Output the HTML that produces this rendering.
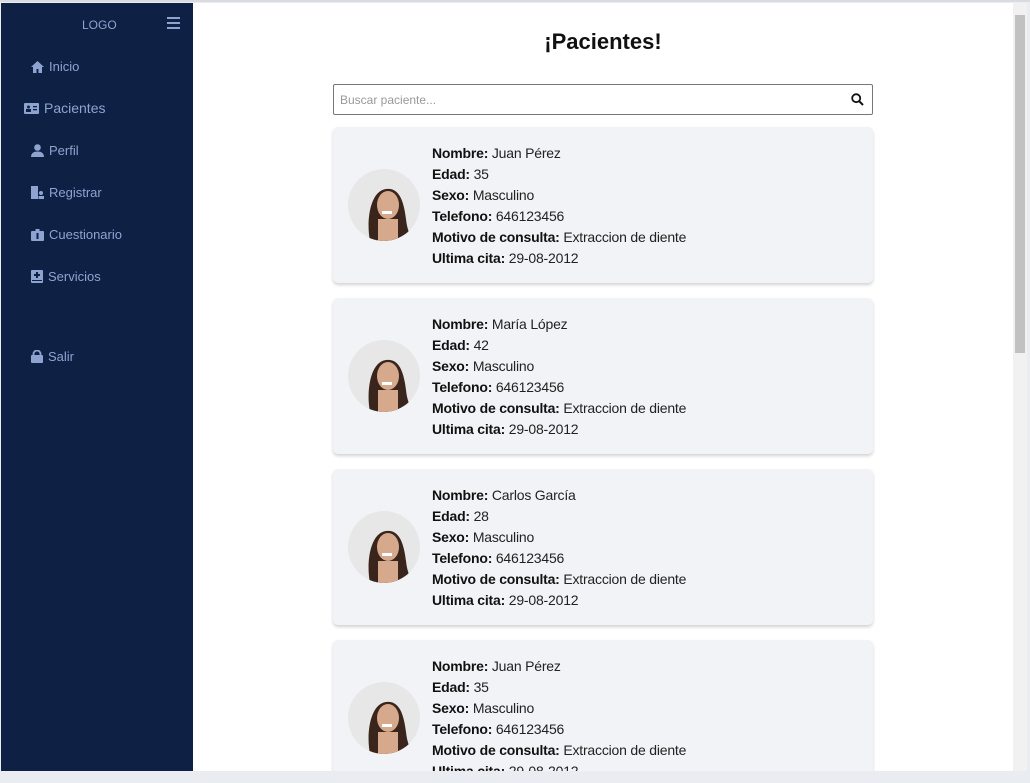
<!DOCTYPE html>
<html><head><meta charset="utf-8"><style>
*{box-sizing:border-box;margin:0;padding:0}
body{width:1030px;height:783px;overflow:hidden;background:#e9ecf1;font-family:"Liberation Sans",sans-serif;position:relative}
.top{position:absolute;left:0;top:0;width:1030px;height:2px;background:#d8dbe0}
.side{position:absolute;left:1px;top:3px;width:192px;height:768px;background:#0f2045;color:#8ea3cf}
.logo{position:absolute;left:81px;top:15px;font-size:12px;color:#8ea3cf}
.ham{position:absolute;left:166px;top:14px;width:13px}
.ham i{display:block;height:2px;background:#8ea3cf;margin-bottom:3px}
.nav{position:absolute;font-size:13px;display:flex;align-items:center;gap:5px}
.nav svg{fill:#8ea3cf}
.main{position:absolute;left:193px;top:3px;width:820px;height:768px;background:#fff;overflow:hidden}
.sb{position:absolute;left:1013px;top:3px;width:14px;height:768px;background:#f1f1f1}
.sb i{position:absolute;left:2px;top:12px;width:10px;height:338px;background:#c1c1c1}
h1{position:absolute;left:0;width:820px;top:26px;text-align:center;font-size:22px;font-weight:bold;color:#111}
.search{position:absolute;left:140px;top:81px;width:540px;height:31px;border:1px solid #777;border-radius:2px}
.search span{position:absolute;left:6px;top:8px;font-size:12px;color:#999}
.card{position:absolute;left:140px;width:540px;height:156px;background:#f2f3f6;border-radius:5px;box-shadow:0 2px 3px rgba(0,0,0,.18)}
.av{position:absolute;left:15px;top:42px;width:72px;height:72px;border-radius:50%;background:#e6e7e6;overflow:hidden}
.info{position:absolute;left:99px;top:16px;font-size:14px;line-height:21px;color:#222;letter-spacing:-0.2px}
.info b{color:#111}
</style></head><body>
<div class="top"></div>
<div class="side">
<div class="logo">LOGO</div>
<div class="ham"><i></i><i></i><i></i></div>
<div class="nav" style="left:30px;top:56px"><svg width="13" height="12" viewBox="0 0 13 12"><path d="M6.5 0L0 6h2v6h3.5V8h2v4H11V6h2z"/></svg>Inicio</div>
<div class="nav" style="left:23px;top:97px;font-size:14px"><svg width="15" height="11" viewBox="0 0 15 11"><rect width="15" height="11" rx="1"/><rect x="2" y="6" width="5" height="3" fill="#0f2045"/><circle cx="4.5" cy="4" r="1.5" fill="#0f2045"/><rect x="9" y="3" width="4" height="1.3" fill="#0f2045"/><rect x="9" y="6" width="4" height="1.3" fill="#0f2045"/></svg>Pacientes</div>
<div class="nav" style="left:30px;top:140px"><svg width="13" height="13" viewBox="0 0 13 13"><circle cx="6.5" cy="3.5" r="3.3"/><path d="M0 13c0-4 3-5.5 6.5-5.5S13 9 13 13z"/></svg>Perfil</div>
<div class="nav" style="left:30px;top:182px"><svg width="13" height="13" viewBox="0 0 13 13"><rect width="7" height="13"/><circle cx="10" cy="7" r="2"/><rect x="7.5" y="10" width="5.5" height="3"/></svg>Registrar</div>
<div class="nav" style="left:30px;top:224px"><svg width="13" height="12" viewBox="0 0 13 12"><rect y="2" width="13" height="10" rx="1"/><rect x="5.5" y="4" width="2" height="6" fill="#0f2045"/><rect x="4.5" y="0" width="4" height="3"/></svg>Cuestionario</div>
<div class="nav" style="left:30px;top:266px"><svg width="12" height="13" viewBox="0 0 12 13"><rect width="12" height="13" rx="1"/><rect x="5" y="2" width="2" height="6" fill="#0f2045"/><rect x="3" y="4" width="6" height="2" fill="#0f2045"/><rect x="1" y="10" width="10" height="1" fill="#0f2045"/></svg>Servicios</div>
<div class="nav" style="left:30px;top:346px"><svg width="12" height="13" viewBox="0 0 12 13"><rect y="5" width="12" height="8" rx="1"/><path d="M2.5 5.5V4a3.5 3.5 0 017 0v1.5" fill="none" stroke="#8ea3cf" stroke-width="1.8"/></svg>Salir</div>
</div>
<div class="main">
<h1>¡Pacientes!</h1>
<div class="search"><span>Buscar paciente...</span><svg style="position:absolute;right:8px;top:8px" width="13" height="13" viewBox="0 0 13 13"><circle cx="5.2" cy="5.2" r="4" fill="none" stroke="#111" stroke-width="1.8"/><path d="M8.2 8.2L12 12" stroke="#111" stroke-width="2"/></svg></div>

<div class="card" style="top:124px"><div class="av"><svg width="72" height="72" viewBox="0 0 72 72"><path d="M22 72c-4-20 0-50 16-52 14-2 18 14 20 30 1 10 4 16 6 22z" fill="#3a251c"/><ellipse cx="40" cy="36" rx="11" ry="14" fill="#d6a88c"/><path d="M30 50h20v22H30z" fill="#d6a88c"/><rect x="34" y="42" width="10" height="3" fill="#fff"/></svg></div>
<div class="info"><b>Nombre:</b> Juan Pérez<br><b>Edad:</b> 35<br><b>Sexo:</b> Masculino<br><b>Telefono:</b> 646123456<br><b>Motivo de consulta:</b> Extraccion de diente<br><b>Ultima cita:</b> 29-08-2012</div></div>

<div class="card" style="top:295px"><div class="av"><svg width="72" height="72" viewBox="0 0 72 72"><path d="M22 72c-4-20 0-50 16-52 14-2 18 14 20 30 1 10 4 16 6 22z" fill="#3a251c"/><ellipse cx="40" cy="36" rx="11" ry="14" fill="#d6a88c"/><path d="M30 50h20v22H30z" fill="#d6a88c"/><rect x="34" y="42" width="10" height="3" fill="#fff"/></svg></div>
<div class="info"><b>Nombre:</b> María López<br><b>Edad:</b> 42<br><b>Sexo:</b> Masculino<br><b>Telefono:</b> 646123456<br><b>Motivo de consulta:</b> Extraccion de diente<br><b>Ultima cita:</b> 29-08-2012</div></div>

<div class="card" style="top:466px"><div class="av"><svg width="72" height="72" viewBox="0 0 72 72"><path d="M22 72c-4-20 0-50 16-52 14-2 18 14 20 30 1 10 4 16 6 22z" fill="#3a251c"/><ellipse cx="40" cy="36" rx="11" ry="14" fill="#d6a88c"/><path d="M30 50h20v22H30z" fill="#d6a88c"/><rect x="34" y="42" width="10" height="3" fill="#fff"/></svg></div>
<div class="info"><b>Nombre:</b> Carlos García<br><b>Edad:</b> 28<br><b>Sexo:</b> Masculino<br><b>Telefono:</b> 646123456<br><b>Motivo de consulta:</b> Extraccion de diente<br><b>Ultima cita:</b> 29-08-2012</div></div>

<div class="card" style="top:637px"><div class="av"><svg width="72" height="72" viewBox="0 0 72 72"><path d="M22 72c-4-20 0-50 16-52 14-2 18 14 20 30 1 10 4 16 6 22z" fill="#3a251c"/><ellipse cx="40" cy="36" rx="11" ry="14" fill="#d6a88c"/><path d="M30 50h20v22H30z" fill="#d6a88c"/><rect x="34" y="42" width="10" height="3" fill="#fff"/></svg></div>
<div class="info"><b>Nombre:</b> Juan Pérez<br><b>Edad:</b> 35<br><b>Sexo:</b> Masculino<br><b>Telefono:</b> 646123456<br><b>Motivo de consulta:</b> Extraccion de diente<br><b>Ultima cita:</b> 29-08-2012</div></div>
</div>
<div class="sb"><i></i></div>
</body></html>
